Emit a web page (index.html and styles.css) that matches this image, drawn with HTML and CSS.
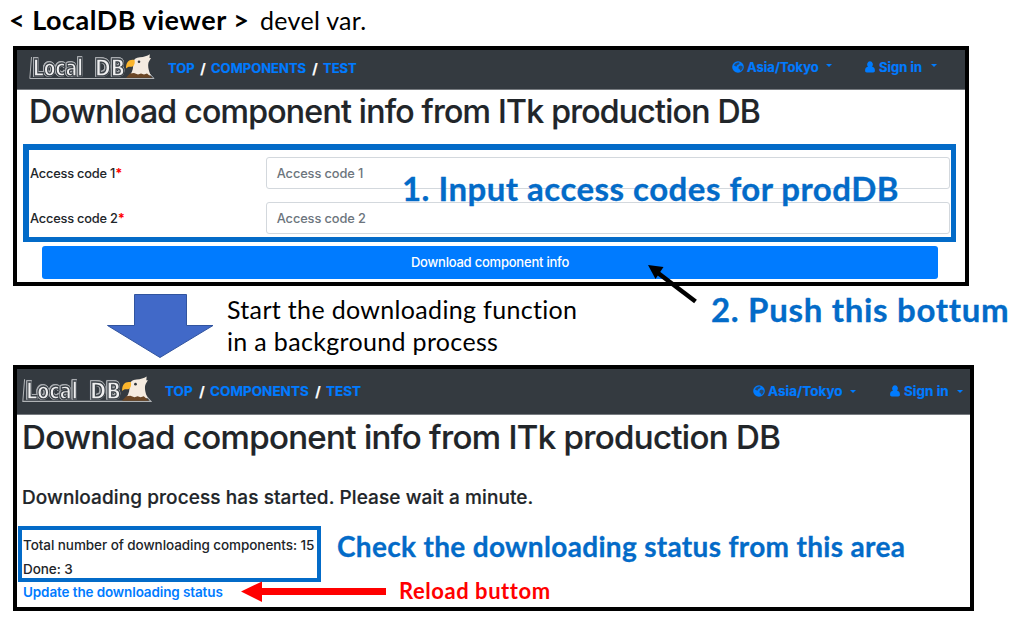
FILE: index.html
```html
<!DOCTYPE html>
<html lang="en">
<head>
<meta charset="utf-8">
<title>LocalDB viewer</title>
<link rel="stylesheet" href="styles.css">
</head>
<body>
<svg class="defs" width="0" height="0" aria-hidden="true">
  <defs>
    <symbol id="globe" viewBox="0 0 12 12">
      <circle cx="6" cy="6" r="5.8" fill="#007bff"/>
      <path d="M5 1.800 7 1.300 7.600 2.400 6.500 3.600 5.300 4 4.800 5.400 3.200 5.200 2 4.600 3 2.800Z" fill="#343a40" opacity=".75"/>
      <path d="M7 5 9 4.600 10.800 5.800 10.300 8 8.600 10 7.600 8.200 6.300 7.200Z" fill="#343a40" opacity=".75"/>
    </symbol>
    <symbol id="user" viewBox="0 0 10 12">
      <path d="M5 .3a2.900 3.200 0 0 1 2.100 5.400C9.300 6 9.900 7.600 9.900 9.800c0 1-.7 1.700-1.700 1.700H1.800C.8 11.500.1 10.800.1 9.800.1 7.600.7 6 2.900 5.700A2.900 3.200 0 0 1 5 .3Z" fill="#007bff"/>
    </symbol>
    <symbol id="logo" viewBox="0 0 126 26">
      <g class="logo-text">
        <text x="4" y="22" textLength="50" lengthAdjust="spacingAndGlyphs">Local</text>
        <text x="66" y="22" textLength="30" lengthAdjust="spacingAndGlyphs">DB</text>
      </g>
      <path d="M2.500 3 .8 24.500H125L120 19" fill="none" stroke="#b0b3b6"/>
      <path d="M101 21C104 17 104.500 13 104 9C104.500 5.500 107 3.500 111 3.300C115 3 118 2 120.800.3L120.500 4 122 4 120 7.500C118.500 10 119 16 122 21.500L101 22Z" fill="#f5ebe0"/>
      <path d="M105.500 6C100 5 97 8 97 14.500C98.500 12.800 100 12.500 101.500 12.800C104.500 13.300 106.500 10 105.500 6Z" fill="#fbb52c"/>
      <path d="M101 19.500 105 19 109 20.500 112 19.500 115 20.500 118 19.500 123 23.800H97Z" fill="#6b4625"/>
      <circle cx="110" cy="7.800" r="1.300" fill="#30343a"/>
    </symbol>
  </defs>
</svg>
<header class="heading"><strong class="heading-name">&lt; LocalDB viewer &gt;</strong><span class="heading-note">devel var.</span></header>

<section class="panel panel-form">
  <nav class="nav">
    <svg class="logo"><use href="#logo"/></svg>
    <span class="crumb top">TOP</span><span class="slash">/</span><span class="crumb comps">COMPONENTS</span><span class="slash">/</span><span class="crumb test">TEST</span>
    <div class="menu zone"><svg class="icon-globe"><use href="#globe"/></svg><span>Asia/Tokyo</span><i class="caret"></i></div>
    <div class="menu sign"><svg class="icon-user"><use href="#user"/></svg><span>Sign in</span><i class="caret"></i></div>
  </nav>
  <h1 class="title">Download component info from ITk production DB</h1>
  <div class="codes">
    <label class="row"><span class="label">Access code 1<b>*</b></span><span class="input">Access code 1</span></label>
    <label class="row"><span class="label">Access code 2<b>*</b></span><span class="input">Access code 2</span></label>
    <strong class="note note-input">1. Input access codes for prodDB</strong>
  </div>
  <div class="button">Download component info</div>
  <svg class="pointer" viewBox="0 0 60 50"><path d="M10 10 47.500 38.500" stroke="#000" stroke-width="4.500"/><path d="M0 2 15.500 4 7.500 16Z"/></svg>
</section>

<div class="step">
  <svg class="down" viewBox="0 0 110 66"><path d="M28.500 1.500H80.500V32.500H107L54 64.500 1.500 32.500H28.500Z" fill="#4169c8" stroke="#31549f"/></svg>
  <p class="step-text">Start the downloading function<br>in a background process</p>
  <strong class="note note-push">2. Push this bottum</strong>
</div>

<section class="panel panel-status">
  <nav class="nav">
    <svg class="logo"><use href="#logo"/></svg>
    <span class="crumb top">TOP</span><span class="slash">/</span><span class="crumb comps">COMPONENTS</span><span class="slash">/</span><span class="crumb test">TEST</span>
    <div class="menu zone"><svg class="icon-globe"><use href="#globe"/></svg><span>Asia/Tokyo</span><i class="caret"></i></div>
    <div class="menu sign"><svg class="icon-user"><use href="#user"/></svg><span>Sign in</span><i class="caret"></i></div>
  </nav>
  <h1 class="title">Download component info from ITk production DB</h1>
  <h2 class="subtitle">Downloading process has started. Please wait a minute.</h2>
  <div class="status-row">
    <div class="status"><div class="total">Total number of downloading components: 15</div><div>Done: 3</div></div>
    <strong class="note note-check">Check the downloading status from this area</strong>
  </div>
  <div class="reload-row">
    <span class="link">Update the downloading status</span>
    <svg class="reload-arrow" viewBox="0 0 146 22"><path d="M0 10.500 21 .5V7H145V14H21V21Z" fill="#f00"/></svg>
    <strong class="reload">Reload buttom</strong>
  </div>
</section>
</body>
</html>
```

FILE: styles.css
```css
* { box-sizing: border-box; }
body { margin: 0; width: 1021px; height: 631px; overflow: hidden; background: #fff; color: #212529; font-family: Inter, "Liberation Sans", sans-serif; white-space: nowrap; }
svg { display: block; flex: none; }
.defs { position: absolute; }

.heading { height: 46px; display: flex; padding-left: 9px; color: #000; font-family: Lato, "Noto Sans", sans-serif; font-size: 27px; line-height: 40px; }
.heading-name { width: 251px; letter-spacing: 0.5px; }
.heading-note { font-size: 25px; letter-spacing: 0.3px; }

.panel { margin-left: 13px; border: 4px solid #000; position: relative; }
.panel-form { width: 956px; height: 240px; }
.panel-status { width: 961px; height: 246px; }

.nav { display: flex; align-items: center; background: #343a40; border-bottom: 1px solid #777b80; color: #007bff; font-size: 13px; font-weight: 700; -webkit-text-stroke: 0.2px; }
.panel-form .nav { height: 40px; padding: 0 0 3px 12px; }
.panel-status .nav { height: 46px; padding: 0 0 1px 5px; }
.panel-form .logo { width: 126px; height: 26px; margin: -2px 13px 0 0; }
.panel-status .logo { width: 130px; height: 27px; margin: -3px 13px 0 0; }
.logo-text { font: bold 23px "DejaVu Sans", sans-serif; fill: #eeeeef; stroke: #3a4046; stroke-width: 1.4px; filter: drop-shadow(0.8px 0 0 #a9acb0) drop-shadow(-0.8px 0 0 #a9acb0) drop-shadow(0 -0.8px 0 #a9acb0); }
.slash { width: 16px; text-align: center; color: #fff; font-size: 14px; }
.panel-form .top { width: 27px; }
.panel-form .comps { width: 96px; }
.panel-form .test { width: 34px; }
.panel-status .nav { font-size: 13.500px; }
.panel-status .top { width: 29px; }
.panel-status .comps { width: 100px; }
.panel-status .test { width: 36px; }
.menu { display: flex; align-items: center; height: 18px; }
.panel-form .menu { margin-top: -3px; }
.icon-globe { width: 12px; height: 12px; margin-right: 3px; }
.icon-user { width: 10px; height: 12px; margin-right: 4px; }
.caret { margin-left: auto; border: 3.500px solid transparent; border-top-color: #007bff; border-bottom: 0; }
.panel-form .caret { margin-top: -2px; }
.panel-form .zone { width: 100px; margin-left: 375px; }
.panel-form .sign { width: 72px; margin-left: 33px; }
.panel-status .zone { width: 103px; margin-left: 391px; }
.panel-status .sign { width: 73px; margin-left: 34px; }

.title { margin: 0; font-weight: 500; -webkit-text-stroke: 0.2px; }
.panel-form .title { height: 54px; padding-left: 12px; font-size: 32px; line-height: 44px; letter-spacing: -0.74px; }
.panel-status .title { height: 60px; padding-left: 5px; font-size: 33px; line-height: 44px; letter-spacing: -0.67px; }

.codes { position: relative; width: 933px; height: 98px; margin-left: 6px; padding: 7px 1px 0; border: solid #036bc8; border-width: 6px 5px 5px 6px; display: flex; flex-direction: column; gap: 13px; }
.row { display: flex; align-items: center; height: 32px; font-size: 12.800px; font-weight: 500; letter-spacing: -0.1px; }
.label { width: 236px; }
.panel-form .label { letter-spacing: -0.2px; }
.label b { color: #f00; }
.input { width: 685px; height: 32px; padding-left: 10px; border: 1px solid #d3d8dd; border-radius: 3px; line-height: 31px; color: #6c757d; }
.button { width: 896px; height: 33px; margin: 4px 0 0 25px; border-radius: 3px; background: #007bff; color: #fff; font-size: 13px; font-weight: 500; line-height: 32px; letter-spacing: -0.22px; text-align: center; }
.pointer { position: absolute; left: 631px; top: 213px; width: 60px; height: 50px; }

.note { color: #036bc8; font-family: Lato, "Noto Sans", sans-serif; font-weight: 700; -webkit-text-stroke: 0.3px; }
.note-input { position: absolute; left: 373px; top: 18px; font-size: 33px; line-height: 40px; letter-spacing: 0.48px; }
.step { height: 79px; display: flex; padding-left: 106px; color: #000; }
.down { width: 110px; height: 66px; margin-top: 7px; }
.step-text { width: 484px; margin: 7px 0 0 11px; font: 25px/32px Lato, "Noto Sans", sans-serif; letter-spacing: 0.33px; }
.note-push { margin-top: 3px; font-size: 33px; line-height: 40px; letter-spacing: 0.7px; }

.subtitle { height: 51px; margin: 0; padding-left: 5px; font-size: 19px; font-weight: 500; line-height: 45px; letter-spacing: 0.09px; -webkit-text-stroke: 0.2px; }
.status-row { display: flex; padding-left: 1px; }
.status { width: 303px; height: 56px; padding: 3px 0 0 1px; border: 4px solid #036bc8; font-size: 13.500px; font-weight: 500; line-height: 24px; letter-spacing: -0.07px; }
.note-check { margin-left: 16px; font-size: 28px; line-height: 40px; letter-spacing: 0.32px; }
.reload-row { display: flex; align-items: center; height: 20px; padding-left: 6px; }
.link { width: 218px; color: #007bff; font-size: 13.500px; font-weight: 600; letter-spacing: -0.12px; }
.reload-arrow { width: 146px; height: 22px; }
.reload { margin: -3px 0 0 12px; color: #f00; font: bold 22px/20px Lato, "Noto Sans", sans-serif; letter-spacing: 0.55px; }
```
